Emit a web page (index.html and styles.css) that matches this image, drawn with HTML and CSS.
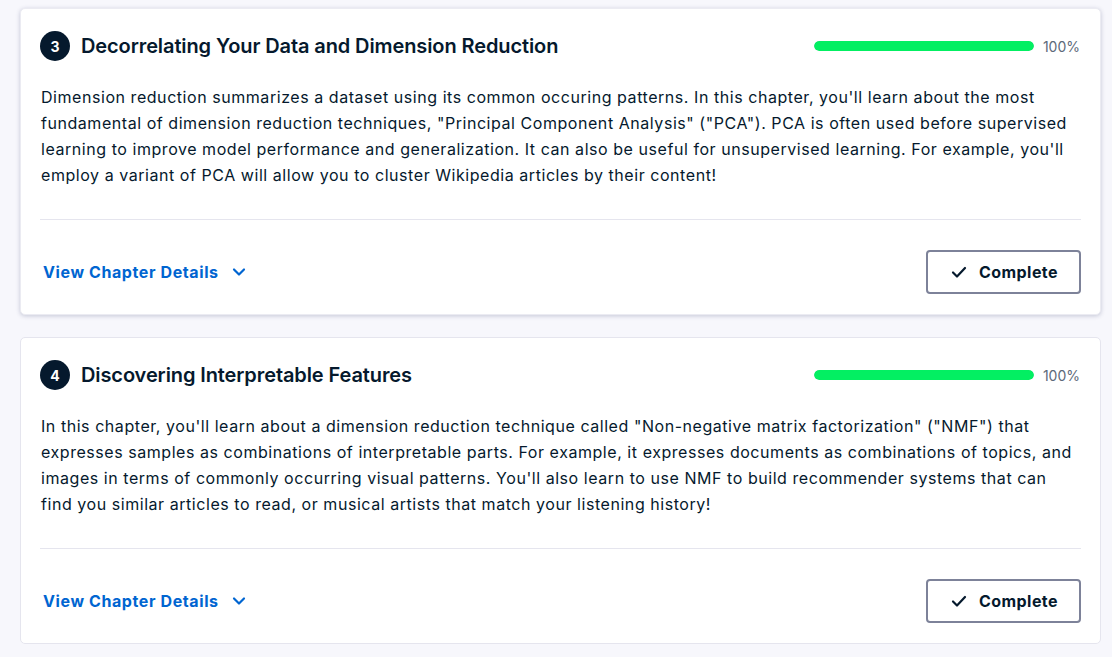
FILE: index.html
```html
<!DOCTYPE html>
<html>
<head>
<meta charset="utf-8">
<link rel="stylesheet" href="styles.css">
</head>
<body>
<div class="list">
  <section class="card card-raised">
    <div class="card-head">
      <div class="head-left">
        <span class="num">3</span>
        <h3 class="title">Decorrelating Your Data and Dimension Reduction</h3>
      </div>
      <div class="progress">
        <div class="bar"><div class="fill" style="width:100%"></div></div>
        <span class="pct">100%</span>
      </div>
    </div>
    <p class="desc">Dimension reduction summarizes a dataset using its common occuring patterns. In this chapter, you'll learn about the most fundamental of dimension reduction techniques, "Principal Component Analysis" ("PCA"). PCA is often used before supervised learning to improve model performance and generalization. It can also be useful for unsupervised learning. For example, you'll employ a variant of PCA will allow you to cluster Wikipedia articles by their content!</p>
    <hr class="divider">
    <div class="card-foot">
      <button class="details">View Chapter Details
        <svg class="chev" width="14" height="14" viewBox="0 0 14 14"><path d="M2 4.5 L7 9.5 L12 4.5" fill="none" stroke="currentColor" stroke-width="2.2" stroke-linecap="round" stroke-linejoin="round"/></svg>
      </button>
      <button class="complete">
        <svg class="check" width="16" height="16" viewBox="0 0 16 16"><path d="M2 8.5 L6 12.5 L14 4" fill="none" stroke="currentColor" stroke-width="2.2" stroke-linecap="round" stroke-linejoin="round"/></svg>
        Complete
      </button>
    </div>
  </section>

  <section class="card">
    <div class="card-head">
      <div class="head-left">
        <span class="num">4</span>
        <h3 class="title">Discovering Interpretable Features</h3>
      </div>
      <div class="progress">
        <div class="bar"><div class="fill" style="width:100%"></div></div>
        <span class="pct">100%</span>
      </div>
    </div>
    <p class="desc">In this chapter, you'll learn about a dimension reduction technique called "Non-negative matrix factorization" ("NMF") that expresses samples as combinations of interpretable parts. For example, it expresses documents as combinations of topics, and images in terms of commonly occurring visual patterns. You'll also learn to use NMF to build recommender systems that can find you similar articles to read, or musical artists that match your listening history!</p>
    <hr class="divider">
    <div class="card-foot">
      <button class="details">View Chapter Details
        <svg class="chev" width="14" height="14" viewBox="0 0 14 14"><path d="M2 4.5 L7 9.5 L12 4.5" fill="none" stroke="currentColor" stroke-width="2.2" stroke-linecap="round" stroke-linejoin="round"/></svg>
      </button>
      <button class="complete">
        <svg class="check" width="16" height="16" viewBox="0 0 16 16"><path d="M2 8.5 L6 12.5 L14 4" fill="none" stroke="currentColor" stroke-width="2.2" stroke-linecap="round" stroke-linejoin="round"/></svg>
        Complete
      </button>
    </div>
  </section>
</div>
</body>
</html>
```

FILE: styles.css
```css
* { box-sizing: border-box; }
html, body {
  margin: 0;
  padding: 0;
  background: #f7f7fc;
  font-family: Inter, "Noto Sans", "Liberation Sans", sans-serif;
  color: #05192d;
}
.list {
  display: flex;
  flex-direction: column;
  gap: 22px;
  padding: 8px 11px 0 20px;
}
.card {
  background: #fff;
  border: 1px solid #e5e5ee;
  border-radius: 5px;
  padding: 21px 19px 20px 19px;
  height: 307px;
  display: flex;
  flex-direction: column;
}
.card-raised {
  border-color: #ebebf2;
  box-shadow: 0 1px 4px rgba(48, 57, 105, 0.25);
}
.card-head {
  display: flex;
  align-items: center;
  justify-content: space-between;
  height: 32px;
}
.head-left {
  display: flex;
  align-items: center;
  gap: 11px;
}
.num {
  width: 30px;
  height: 30px;
  border-radius: 50%;
  background: #05192d;
  color: #fff;
  font-size: 14px;
  font-weight: 700;
  display: flex;
  align-items: center;
  justify-content: center;
}
.title {
  margin: 0;
  font-size: 20px;
  font-weight: 600;
  letter-spacing: -0.1px;
}
.progress {
  display: flex;
  align-items: center;
  gap: 9px;
  padding-right: 1px;
}
.bar {
  width: 220px;
  height: 10px;
  border-radius: 5px;
  background: #e5e5ee;
  overflow: hidden;
}
.fill {
  height: 100%;
  background: #03ef62;
  border-radius: 5px;
}
.pct {
  font-size: 14px;
  color: #5d6a7a;
}
.desc {
  margin: 22px 0 0 1px;
  font-size: 16px;
  line-height: 26px;
  letter-spacing: 0.55px;
}
.divider {
  border: 0;
  border-top: 1px solid #e5e5ee;
  margin: 31px 0 0 0;
}
.card-foot {
  margin-top: auto;
  display: flex;
  align-items: center;
  justify-content: space-between;
}
.details {
  background: none;
  border: 0;
  padding: 0 0 0 3px;
  font-family: inherit;
  font-size: 16px;
  font-weight: 700;
  letter-spacing: 0.6px;
  color: #0065d1;
  display: flex;
  align-items: center;
  gap: 13px;
}
.complete {
  width: 155px;
  height: 44px;
  background: #fff;
  border: 2px solid #7d8299;
  border-radius: 4px;
  font-family: inherit;
  font-size: 16px;
  font-weight: 700;
  letter-spacing: 0.45px;
  color: #05192d;
  display: flex;
  align-items: center;
  justify-content: center;
  gap: 12px;
  padding: 0 0 0 2px;
}
.check { color: #05192d; }
```
